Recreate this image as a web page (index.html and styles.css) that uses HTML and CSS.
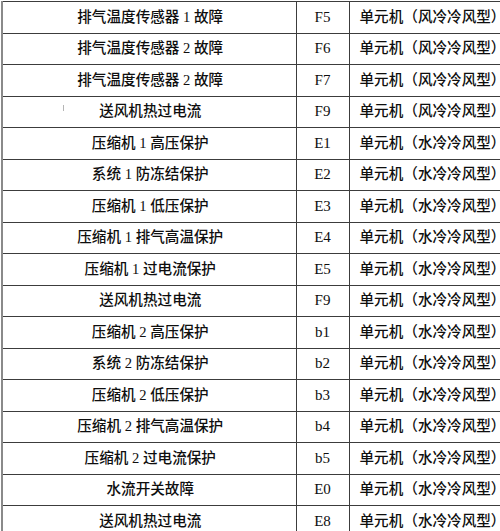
FILE: index.html
```html
<!DOCTYPE html>
<html lang="zh-CN">
<head>
<meta charset="utf-8">
<title>故障代码表</title>
<link rel="stylesheet" href="styles.css">
</head>
<body>
<table class="codes">
  <colgroup>
    <col class="c-name">
    <col class="c-code">
    <col class="c-type">
  </colgroup>
  <tbody>
    <tr><td class="name">排气温度传感器 1 故障</td><td class="code">F5</td><td class="type">单元机（风冷冷风型）</td></tr>
    <tr><td class="name">排气温度传感器 2 故障</td><td class="code">F6</td><td class="type">单元机（风冷冷风型）</td></tr>
    <tr><td class="name">排气温度传感器 2 故障</td><td class="code">F7</td><td class="type">单元机（风冷冷风型）</td></tr>
    <tr><td class="name mark-cell"><span class="tick"></span>送风机热过电流</td><td class="code">F9</td><td class="type">单元机（风冷冷风型）</td></tr>
    <tr><td class="name">压缩机 1 高压保护</td><td class="code">E1</td><td class="type">单元机（水冷冷风型）</td></tr>
    <tr><td class="name">系统 1 防冻结保护</td><td class="code">E2</td><td class="type">单元机（水冷冷风型）</td></tr>
    <tr><td class="name">压缩机 1 低压保护</td><td class="code">E3</td><td class="type">单元机（水冷冷风型）</td></tr>
    <tr><td class="name">压缩机 1 排气高温保护</td><td class="code">E4</td><td class="type">单元机（水冷冷风型）</td></tr>
    <tr><td class="name">压缩机 1 过电流保护</td><td class="code">E5</td><td class="type">单元机（水冷冷风型）</td></tr>
    <tr><td class="name">送风机热过电流</td><td class="code">F9</td><td class="type">单元机（水冷冷风型）</td></tr>
    <tr><td class="name">压缩机 2 高压保护</td><td class="code">b1</td><td class="type">单元机（水冷冷风型）</td></tr>
    <tr><td class="name">系统 2 防冻结保护</td><td class="code">b2</td><td class="type">单元机（水冷冷风型）</td></tr>
    <tr><td class="name">压缩机 2 低压保护</td><td class="code">b3</td><td class="type">单元机（水冷冷风型）</td></tr>
    <tr><td class="name">压缩机 2 排气高温保护</td><td class="code">b4</td><td class="type">单元机（水冷冷风型）</td></tr>
    <tr><td class="name">压缩机 2 过电流保护</td><td class="code">b5</td><td class="type">单元机（水冷冷风型）</td></tr>
    <tr><td class="name">水流开关故障</td><td class="code">E0</td><td class="type">单元机（水冷冷风型）</td></tr>
    <tr><td class="name">送风机热过电流</td><td class="code">E8</td><td class="type">单元机（水冷冷风型）</td></tr>
  </tbody>
</table>
</body>
</html>
```

FILE: styles.css
```css
html, body {
  margin: 0;
  padding: 0;
  background: #ffffff;
  overflow: hidden;
  width: 500px;
  height: 531px;
}

body {
  font-family: "Liberation Serif", "Noto Sans CJK SC", serif;
  color: #0e0e0e;
}

.codes {
  border-collapse: collapse;
  table-layout: fixed;
  width: 560px;
  margin: 1px 0 0 1px;
  border-left: 2px solid #8a8a8a;
}

.c-name { width: 294px; }
.c-code { width: 53px; }
.c-type { width: 213px; }

.codes td {
  height: 31.5px;
  padding: 0;
  border-top: 1px solid #3c3c3c;
  border-bottom: 1px solid #3c3c3c;
  font-size: 14.6px;
  font-weight: 500;
  line-height: 1;
  white-space: nowrap;
  vertical-align: middle;
  box-sizing: border-box;
}

.codes .code {
  border-left: 1px solid #3c3c3c;
  border-right: 1px solid #3c3c3c;
  text-align: center;
  font-size: 15px;
}

.codes .name {
  text-align: center;
  padding-left: 2px;
}

.codes .type {
  text-align: left;
  padding-left: 10px;
}

.mark-cell {
  position: relative;
}

.tick {
  position: absolute;
  left: 60px;
  top: 8px;
  width: 1px;
  height: 6px;
  background: #b5b5b5;
}
```
